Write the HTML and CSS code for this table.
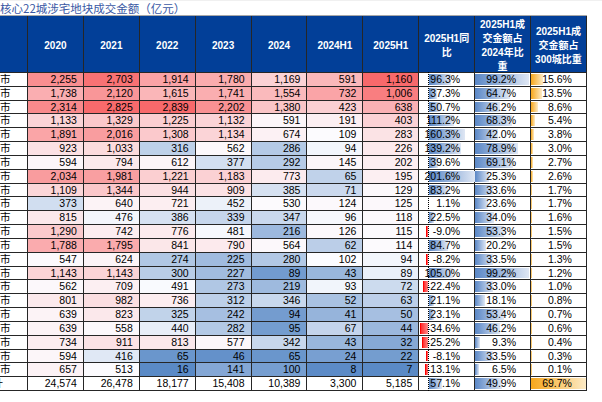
FILE: index.html
```html
<!DOCTYPE html>
<html lang="zh-CN">
<head>
<meta charset="utf-8">
<title>核心22城涉宅地块成交金额</title>
<link rel="stylesheet" href="styles.css">
</head>
<body>
<div class="sheet">
  <div class="title">核心22城涉宅地块成交金额（亿元）</div>
  <div class="grid">
    <div class="h"></div>
    <div class="h">2020</div>
    <div class="h">2021</div>
    <div class="h">2022</div>
    <div class="h">2023</div>
    <div class="h">2024</div>
    <div class="h">2024H1</div>
    <div class="h">2025H1</div>
    <div class="h">2025H1同<br>比</div>
    <div class="h">2025H1成<br>交金额占<br>2024年比<br>重</div>
    <div class="h">2025H1成<br>交金额占<br>300城比重</div>

    <div class="c">市</div><div class="n a">2,255</div><div class="n a">2,703</div><div class="n a">1,914</div><div class="n a">1,780</div><div class="n a">1,169</div><div class="n b">591</div><div class="n b">1,160</div><div class="p y"><span>96.3%</span></div><div class="p s"><span>99.2%</span></div><div class="p o"><span>15.6%</span></div>
    <div class="c">市</div><div class="n a">1,738</div><div class="n a">2,120</div><div class="n a">1,615</div><div class="n a">1,741</div><div class="n a">1,554</div><div class="n b">732</div><div class="n b">1,006</div><div class="p y"><span>37.3%</span></div><div class="p s"><span>64.7%</span></div><div class="p o"><span>13.5%</span></div>
    <div class="c">市</div><div class="n a">2,314</div><div class="n a">2,825</div><div class="n a">2,839</div><div class="n a">2,202</div><div class="n a">1,380</div><div class="n b">423</div><div class="n b">638</div><div class="p y"><span>50.7%</span></div><div class="p s"><span>46.2%</span></div><div class="p o"><span>8.6%</span></div>
    <div class="c">市</div><div class="n a">1,133</div><div class="n a">1,329</div><div class="n a">1,225</div><div class="n a">1,132</div><div class="n a">591</div><div class="n b">191</div><div class="n b">403</div><div class="p y"><span>111.2%</span></div><div class="p s"><span>68.3%</span></div><div class="p o"><span>5.4%</span></div>
    <div class="c">市</div><div class="n a">1,891</div><div class="n a">2,016</div><div class="n a">1,308</div><div class="n a">1,134</div><div class="n a">674</div><div class="n b">109</div><div class="n b">283</div><div class="p y"><span>160.3%</span></div><div class="p s"><span>42.0%</span></div><div class="p o"><span>3.8%</span></div>
    <div class="c">市</div><div class="n a">923</div><div class="n a">1,033</div><div class="n a">316</div><div class="n a">562</div><div class="n a">286</div><div class="n b">94</div><div class="n b">226</div><div class="p y"><span>139.2%</span></div><div class="p s"><span>78.9%</span></div><div class="p o"><span>3.0%</span></div>
    <div class="c">市</div><div class="n a">594</div><div class="n a">794</div><div class="n a">612</div><div class="n a">377</div><div class="n a">292</div><div class="n b">145</div><div class="n b">202</div><div class="p y"><span>39.6%</span></div><div class="p s"><span>69.1%</span></div><div class="p o"><span>2.7%</span></div>
    <div class="c">市</div><div class="n a">2,034</div><div class="n a">1,981</div><div class="n a">1,221</div><div class="n a">1,183</div><div class="n a">773</div><div class="n b">65</div><div class="n b">195</div><div class="p y"><span>201.6%</span></div><div class="p s"><span>25.3%</span></div><div class="p o"><span>2.6%</span></div>
    <div class="c">市</div><div class="n a">1,109</div><div class="n a">1,344</div><div class="n a">944</div><div class="n a">909</div><div class="n a">385</div><div class="n b">71</div><div class="n b">129</div><div class="p y"><span>83.2%</span></div><div class="p s"><span>33.6%</span></div><div class="p o"><span>1.7%</span></div>
    <div class="c">市</div><div class="n a">373</div><div class="n a">640</div><div class="n a">721</div><div class="n a">452</div><div class="n a">530</div><div class="n b">124</div><div class="n b">125</div><div class="p y"><span>1.1%</span></div><div class="p s"><span>23.6%</span></div><div class="p o"><span>1.7%</span></div>
    <div class="c">市</div><div class="n a">815</div><div class="n a">476</div><div class="n a">386</div><div class="n a">339</div><div class="n a">347</div><div class="n b">96</div><div class="n b">118</div><div class="p y"><span>22.5%</span></div><div class="p s"><span>34.0%</span></div><div class="p o"><span>1.6%</span></div>
    <div class="c">市</div><div class="n a">1,290</div><div class="n a">742</div><div class="n a">776</div><div class="n a">481</div><div class="n a">216</div><div class="n b">126</div><div class="n b">115</div><div class="p y"><span>-9.0%</span></div><div class="p s"><span>53.3%</span></div><div class="p o"><span>1.5%</span></div>
    <div class="c">市</div><div class="n a">1,788</div><div class="n a">1,795</div><div class="n a">841</div><div class="n a">790</div><div class="n a">564</div><div class="n b">62</div><div class="n b">114</div><div class="p y"><span>84.7%</span></div><div class="p s"><span>20.2%</span></div><div class="p o"><span>1.5%</span></div>
    <div class="c">市</div><div class="n a">547</div><div class="n a">624</div><div class="n a">274</div><div class="n a">225</div><div class="n a">280</div><div class="n b">102</div><div class="n b">94</div><div class="p y"><span>-8.2%</span></div><div class="p s"><span>33.5%</span></div><div class="p o"><span>1.3%</span></div>
    <div class="c">市</div><div class="n a">1,143</div><div class="n a">1,143</div><div class="n a">300</div><div class="n a">227</div><div class="n a">89</div><div class="n b">43</div><div class="n b">89</div><div class="p y"><span>105.0%</span></div><div class="p s"><span>99.2%</span></div><div class="p o"><span>1.2%</span></div>
    <div class="c">市</div><div class="n a">562</div><div class="n a">709</div><div class="n a">491</div><div class="n a">273</div><div class="n a">219</div><div class="n b">93</div><div class="n b">72</div><div class="p y"><span>-22.4%</span></div><div class="p s"><span>33.0%</span></div><div class="p o"><span>1.0%</span></div>
    <div class="c">市</div><div class="n a">801</div><div class="n a">982</div><div class="n a">736</div><div class="n a">312</div><div class="n a">346</div><div class="n b">52</div><div class="n b">63</div><div class="p y"><span>21.1%</span></div><div class="p s"><span>18.1%</span></div><div class="p o"><span>0.8%</span></div>
    <div class="c">市</div><div class="n a">639</div><div class="n a">823</div><div class="n a">325</div><div class="n a">242</div><div class="n a">94</div><div class="n b">41</div><div class="n b">50</div><div class="p y"><span>23.1%</span></div><div class="p s"><span>53.4%</span></div><div class="p o"><span>0.7%</span></div>
    <div class="c">市</div><div class="n a">639</div><div class="n a">558</div><div class="n a">440</div><div class="n a">282</div><div class="n a">95</div><div class="n b">67</div><div class="n b">44</div><div class="p y"><span>-34.6%</span></div><div class="p s"><span>46.2%</span></div><div class="p o"><span>0.6%</span></div>
    <div class="c">市</div><div class="n a">734</div><div class="n a">911</div><div class="n a">813</div><div class="n a">577</div><div class="n a">342</div><div class="n b">43</div><div class="n b">32</div><div class="p y"><span>-25.2%</span></div><div class="p s"><span>9.3%</span></div><div class="p o"><span>0.4%</span></div>
    <div class="c">市</div><div class="n a">594</div><div class="n a">416</div><div class="n a">65</div><div class="n a">46</div><div class="n a">65</div><div class="n b">24</div><div class="n b">22</div><div class="p y"><span>-8.1%</span></div><div class="p s"><span>33.5%</span></div><div class="p o"><span>0.3%</span></div>
    <div class="c">市</div><div class="n a">657</div><div class="n a">513</div><div class="n a">16</div><div class="n a">141</div><div class="n a">100</div><div class="n b">8</div><div class="n b">7</div><div class="p y"><span>-13.1%</span></div><div class="p s"><span>6.5%</span></div><div class="p o"><span>0.1%</span></div>
    <div class="c total">合计</div><div class="n">24,574</div><div class="n">26,478</div><div class="n">18,177</div><div class="n">15,408</div><div class="n">10,389</div><div class="n">3,300</div><div class="n">5,185</div><div class="p y"><span>57.1%</span></div><div class="p s"><span>49.9%</span></div><div class="p o"><span>69.7%</span></div>
  </div>
</div>
<script src="script.js"></script>
</body>
</html>
```

FILE: styles.css
```css
* {
  box-sizing: border-box;
  margin: 0;
  padding: 0;
}

html, body {
  background: #ffffff;
}

body {
  width: 602px;
  height: 402px;
  overflow: hidden;
  font-family: "Liberation Sans", "Noto Sans CJK SC", sans-serif;
  color: #000;
}

.title {
  height: 15px;
  line-height: 14px;
  font-family: "Noto Sans CJK SC", sans-serif;
  font-size: 11.5px;
  color: #3a58a4;
  white-space: nowrap;
  border-top: 1px solid #f0f0f0;
}

.grid {
  display: grid;
  grid-template-columns: 27px repeat(10, 54.9px);
  grid-template-rows: 56px repeat(23, 12.84px);
  gap: 1px;
  width: 587px;
  padding: 0 1px 1px 0;
  background: #262626;
  border-top: 1px solid #a8a8a8;
}

.h {
  background: #023f98;
  color: #ffffff;
  font-family: "Liberation Sans", "Noto Sans CJK SC", sans-serif;
  font-weight: bold;
  font-size: 10px;
  line-height: 14px;
  text-align: center;
  display: flex;
  align-items: center;
  justify-content: center;
  padding-top: 4px;
  overflow: hidden;
}

.c {
  background: #ffffff;
  font-family: "Noto Sans CJK SC", sans-serif;
  font-size: 10.5px;
  line-height: 12.84px;
  white-space: nowrap;
}

.c.total {
  overflow: hidden;
  text-indent: -18px;
}

.n {
  background: #ffffff;
  text-align: right;
  padding-right: 6px;
  font-size: 10.5px;
  line-height: 12.84px;
  white-space: nowrap;
}

.p {
  position: relative;
  background: #ffffff;
  text-align: right;
  padding-right: 14px;
  font-size: 10.5px;
  line-height: 12.84px;
  white-space: nowrap;
}

.p span {
  position: relative;
}

.y::after {
  content: "";
  position: absolute;
  left: 8.7px;
  top: -1px;
  bottom: -1px;
  border-left: 1px dotted #000;
}

.bar {
  position: absolute;
  top: 1px;
  bottom: 1px;
  display: block;
}

.bar.blue {
  background: linear-gradient(90deg, #5a87c6, #dfe7f4);
}

.bar.orange {
  background: linear-gradient(90deg, #f7a71c, #fdebc6);
}

.bar.red {
  background: linear-gradient(90deg, #ff2a2a, #ff8c8c);
  border-left: 1px solid #ff0000;
}
```

FILE: script.js
```js
(function () {
  var W = [252, 252, 255], R = [248, 105, 107], B = [90, 138, 198];
  function val(el) { return parseFloat(el.textContent.replace(/,/g, '')); }
  function mix(c, t) {
    t = Math.max(0, Math.min(1, t));
    return 'rgb(' + W.map(function (w, i) { return Math.round(w + (c[i] - w) * t); }).join(',') + ')';
  }
  function scale(sel, mid) {
    var els = Array.prototype.slice.call(document.querySelectorAll(sel));
    var vs = els.map(val);
    var mx = Math.max.apply(null, vs), mn = Math.min.apply(null, vs);
    if (mid == null) {
      var s = vs.slice().sort(function (a, b) { return a - b; });
      var n = s.length;
      mid = n % 2 ? s[(n - 1) / 2] : (s[n / 2 - 1] + s[n / 2]) / 2;
    }
    els.forEach(function (el, i) {
      var v = vs[i];
      el.style.background = v >= mid ? mix(R, (v - mid) / (mx - mid)) : mix(B, (mid - v) / (mid - mn));
    });
  }
  scale('.a', 500);
  scale('.b');

  function bar(el, cls, left, width) {
    var b = document.createElement('i');
    b.className = 'bar ' + cls;
    b.style.left = left + 'px';
    b.style.width = width + 'px';
    el.insertBefore(b, el.firstChild);
  }
  document.querySelectorAll('.y').forEach(function (el) {
    var v = val(el);
    var w = Math.abs(v) * 0.228;
    if (v >= 0) bar(el, 'blue', 9.7, w);
    else { w = Math.max(2, w); bar(el, 'red', 8.7 - w, w); }
  });
  document.querySelectorAll('.s').forEach(function (el) {
    bar(el, 'blue', 0, val(el) / 99.2 * 54);
  });
  document.querySelectorAll('.o').forEach(function (el) {
    bar(el, 'orange', 0, Math.max(1, val(el) / 69.7 * 54.9));
  });
})();
```
